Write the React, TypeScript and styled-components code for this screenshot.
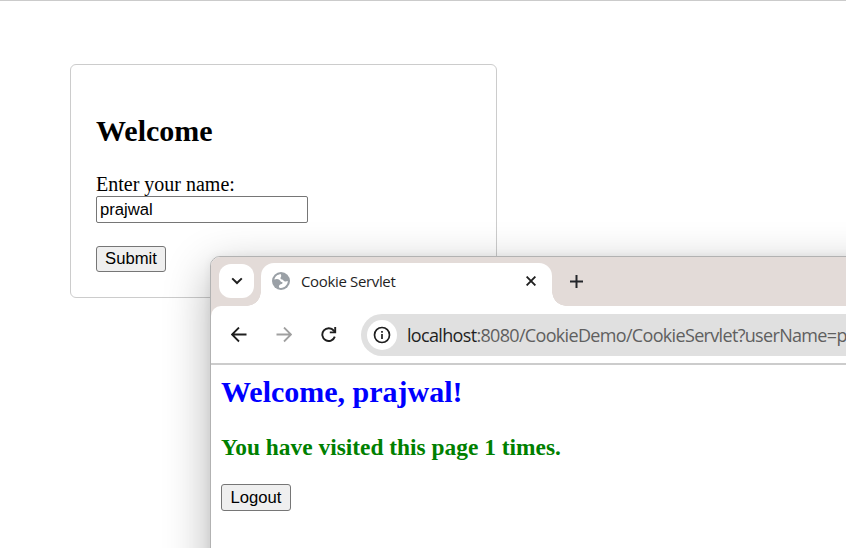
import React from "react";
import styled, { createGlobalStyle } from "styled-components";

const GlobalStyle = createGlobalStyle`
  * { box-sizing: border-box; }
  body { margin: 0; background: #fff; overflow: hidden; }
`;

const Desktop = styled.main`
  position: relative;
  width: 846px;
  height: 548px;
  overflow: hidden;
  border-top: 1px solid #cbcbcb;
  padding: 63px 0 0 70px;
  background: #fff;
  font-family: "Liberation Serif", "Times New Roman", serif;
`;

const FormCard = styled.form`
  display: flex;
  flex-direction: column;
  align-items: flex-start;
  width: 427px;
  height: 234px;
  padding: 49px 25px 0;
  border: 1px solid #ccc;
  border-radius: 6px;
`;

const Heading = styled.h2<{ $color?: string; $size: number }>`
  margin: 0;
  color: ${(p) => p.$color ?? "#000"};
  font-size: ${(p) => p.$size}px;
  line-height: 34px;
  font-weight: 700;
  white-space: nowrap;
`;

const Label = styled.label`
  margin-top: 25px;
  font-size: 20px;
  line-height: 23px;
`;

const NameInput = styled.input`
  width: 212px;
  height: 27px;
  padding: 1px 3px;
  border: 1px solid #767676;
  border-radius: 2px;
  background: #fff;
  color: #000;
  font: 16.67px "Liberation Sans", Arial, sans-serif;
  outline: none;
`;

const PlainButton = styled.button<{ $gap: number; $height: number }>`
  width: 70px;
  height: ${(p) => p.$height}px;
  margin-top: ${(p) => p.$gap}px;
  padding: 0;
  border: 1px solid #767676;
  border-radius: 3px;
  background: #efefef;
  color: #000;
  font: 16.67px "Liberation Sans", Arial, sans-serif;
`;

const BrowserWindow = styled.section`
  position: absolute;
  left: 210px;
  top: 255px;
  width: 760px;
  height: 420px;
  border: 1px solid #b2b2b2;
  border-radius: 10px;
  overflow: hidden;
  background: #fff;
  box-shadow: 0 14px 46px rgba(0, 0, 0, 0.3), 0 0 8px rgba(0, 0, 0, 0.06);
`;

const TabStrip = styled.div`
  display: flex;
  height: 49px;
  padding: 7px 0 0 8px;
  background: #e3dbd8;
`;

const TabSearch = styled.div`
  display: grid;
  place-items: center;
  width: 35px;
  height: 34px;
  border-radius: 12px;
  background: #fff;
`;

const Tab = styled.div`
  position: relative;
  display: flex;
  align-items: center;
  width: 291px;
  height: 43px;
  margin: -1px 0 0 7px;
  padding: 0 16px 7px 11px;
  border-radius: 13px 13px 0 0;
  background: #fff;

  &::before,
  &::after {
    content: "";
    position: absolute;
    bottom: 0;
    width: 14px;
    height: 14px;
  }
  &::before {
    right: 100%;
    background: radial-gradient(circle at 0 0, transparent 13.5px, #fff 14px);
  }
  &::after {
    left: 100%;
    background: radial-gradient(circle at 100% 0, transparent 13.5px, #fff 14px);
  }
`;

const TabTitle = styled.span`
  flex: 1;
  margin-left: 11px;
  color: #1f1f1f;
  font: 15px/20px "Open Sans", "Noto Sans", sans-serif;
  letter-spacing: -0.35px;
`;

const NewTab = styled.div`
  display: grid;
  place-items: center;
  width: 20px;
  height: 34px;
  margin-left: 14px;
`;

const ToolbarBack = styled.div`
  background: #e3dbd8;
`;

const Toolbar = styled.div`
  display: flex;
  align-items: center;
  height: 59px;
  padding: 0 0 0 20px;
  border-bottom: 2px solid #ccc;
  border-radius: 10px 0 0 0;
  background: #fff;
`;

const NavIcon = styled.div`
  display: grid;
  width: 45px;
  place-items: center start;
`;

const AddressBar = styled.div`
  display: flex;
  align-items: center;
  flex: 1;
  height: 42px;
  margin-left: -5px;
  padding-left: 6px;
  border-radius: 21px 0 0 21px;
  background: #e0e0e0;
`;

const SiteInfo = styled.div`
  display: grid;
  place-items: center;
  flex: none;
  width: 30px;
  height: 30px;
  border-radius: 50%;
  background: #fff;
`;

const Url = styled.span`
  margin: 1px 0 0 10px;
  color: #5f5f5f;
  font: 18px/24px "Open Sans", "Noto Sans", sans-serif;
  letter-spacing: -0.67px;
  white-space: nowrap;
`;

const Host = styled.span`
  color: #1f1f1f;
`;

const PageBody = styled.div`
  display: flex;
  flex-direction: column;
  align-items: flex-start;
  gap: 21px;
  padding: 10px;
`;

const Chevron = () => (
  <svg width="12" height="8" viewBox="0 0 12 8" fill="none" stroke="#1f1f1f" strokeWidth="2">
    <path d="M1.2 1.4 6 6l4.8-4.6" />
  </svg>
);

const Globe = () => (
  <svg width="18" height="18" viewBox="0 0 18 18">
    <circle cx="9" cy="9" r="9" fill="#9aa0a6" />
    <path
      d="M9 2.2C5.5 2.2 3 4.4 2.3 7.6c1.5-.6 3.7-.8 5 .1 1.2.9 1 2 2.4 2.3 1.3.2 1 1.6 0 2-1.5.5-2.6.8-2.8 2.3-.1.6.2 1 .5 1.4 4.5 1 8.3-2.4 8.4-6.7-1.6.6-3.6.6-4.3-.6-.6-1-2.4-.6-2.9-1.6-.6-1.3.8-2 .6-3.1C9.1 3 9 2.5 9 2.2Z"
      fill="#fff"
    />
  </svg>
);

const CloseIcon = () => (
  <svg width="10" height="10" viewBox="0 0 10 10" stroke="#1f1f1f" strokeWidth="1.9">
    <path d="m.6.6 8.8 8.8M9.4.6.6 9.4" />
  </svg>
);

const PlusIcon = () => (
  <svg width="13" height="13" viewBox="0 0 13 13" stroke="#24262b" strokeWidth="2">
    <path d="M0 6.5h13M6.5 0v13" />
  </svg>
);

const Arrow = ({ color, flip = false }: { color: string; flip?: boolean }) => (
  <svg width="16" height="16" viewBox="0 0 16 16" fill="none" stroke={color} strokeWidth="1.8">
    <path d={flip ? "M.5 7.5H15M8 .5l7 7-7 7" : "M15.5 7.5H1M8 .5l-7 7 7 7"} />
  </svg>
);

const Reload = () => (
  <svg width="16" height="16" viewBox="0 0 16 16" fill="none" stroke="#1f1f1f" strokeWidth="1.9">
    <path d="M13.8 9.6A6.4 6.4 0 1 1 12.8 3.7l1.4 1.6" />
    <path d="M14.2 0v5.4H8.8" />
  </svg>
);

const Info = () => (
  <svg width="18" height="18" viewBox="0 0 18 18" fill="none" stroke="#1f1f1f" strokeWidth="1.7">
    <circle cx="9" cy="9" r="7.5" />
    <path d="M9 8v5M9 5v1.8" />
  </svg>
);

export default function App() {
  return (
    <>
      <GlobalStyle />
      <Desktop>
        <FormCard onSubmit={(e) => e.preventDefault()}>
          <Heading $size={30}>Welcome</Heading>
          <Label htmlFor="name">Enter your name:</Label>
          <NameInput id="name" defaultValue="prajwal" />
          <PlainButton $gap={23} $height={26}>Submit</PlainButton>
        </FormCard>
        <BrowserWindow>
          <TabStrip>
            <TabSearch><Chevron /></TabSearch>
            <Tab>
              <Globe />
              <TabTitle>Cookie Servlet</TabTitle>
              <CloseIcon />
            </Tab>
            <NewTab><PlusIcon /></NewTab>
          </TabStrip>
          <ToolbarBack>
            <Toolbar>
              <NavIcon><Arrow color="#1f1f1f" /></NavIcon>
              <NavIcon><Arrow color="#a0a0a0" flip /></NavIcon>
              <NavIcon><Reload /></NavIcon>
              <AddressBar>
                <SiteInfo><Info /></SiteInfo>
                <Url><Host>localhost</Host>:8080/CookieDemo/CookieServlet?userName=p</Url>
              </AddressBar>
            </Toolbar>
          </ToolbarBack>
          <PageBody>
            <Heading $size={30} $color="#0000ff">Welcome, prajwal!</Heading>
            <Heading as="h3" $size={23.4} $color="#008000">You have visited this page 1 times.</Heading>
            <PlainButton $gap={-1} $height={27}>Logout</PlainButton>
          </PageBody>
        </BrowserWindow>
      </Desktop>
    </>
  );
}
